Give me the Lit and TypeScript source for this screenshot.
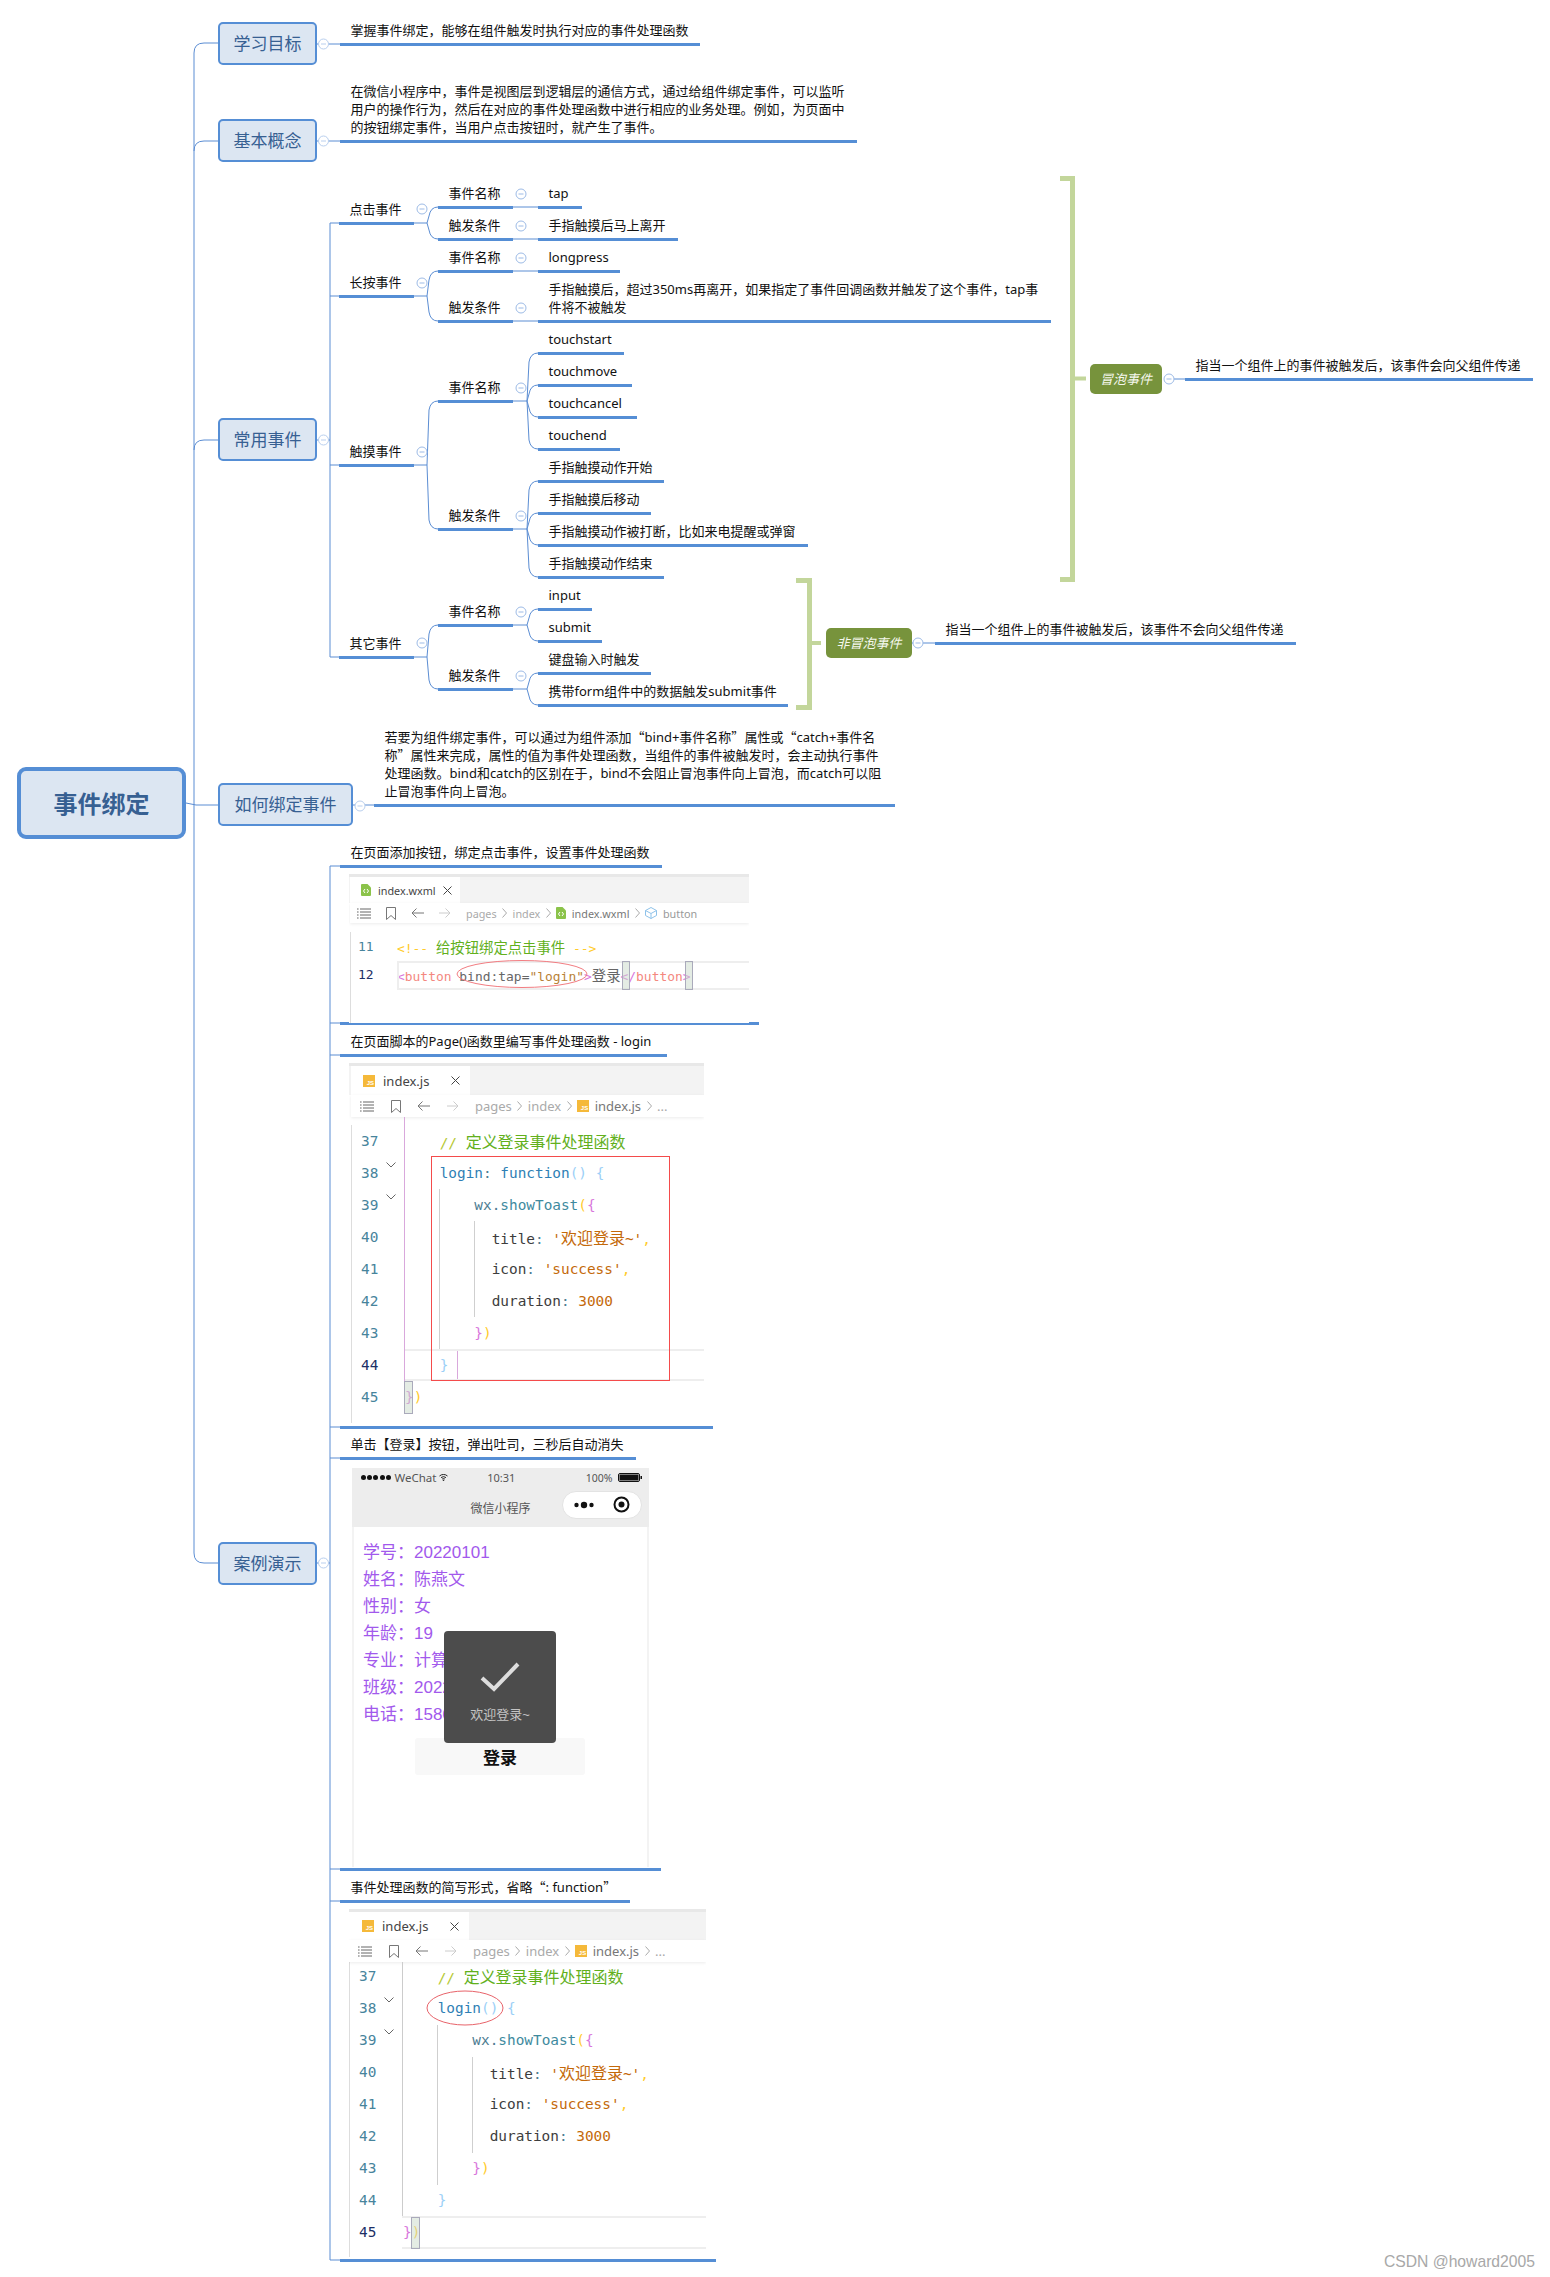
import { LitElement, html, css, svg } from "lit";
import { customElement } from "lit/decorators.js";

type Leaf = { x0: number; x1: number; y: number; lines?: string[] };

const L4 = 538;
const leaves: Leaf[] = [
  { x0: 340, x1: 700, y: 44, lines: ["掌握事件绑定，能够在组件触发时执行对应的事件处理函数"] },
  { x0: 340, x1: 857, y: 141, lines: ["在微信小程序中，事件是视图层到逻辑层的通信方式，通过给组件绑定事件，可以监听", "用户的操作行为，然后在对应的事件处理函数中进行相应的业务处理。例如，为页面中", "的按钮绑定事件，当用户点击按钮时，就产生了事件。"] },
  { x0: 339, x1: 414, y: 223, lines: ["点击事件"] },
  { x0: 339, x1: 414, y: 296, lines: ["长按事件"] },
  { x0: 339, x1: 414, y: 465, lines: ["触摸事件"] },
  { x0: 339, x1: 414, y: 657, lines: ["其它事件"] },
  { x0: 438, x1: 513, y: 207, lines: ["事件名称"] },
  { x0: 438, x1: 513, y: 239, lines: ["触发条件"] },
  { x0: 438, x1: 513, y: 271, lines: ["事件名称"] },
  { x0: 438, x1: 513, y: 321, lines: ["触发条件"] },
  { x0: 438, x1: 513, y: 401, lines: ["事件名称"] },
  { x0: 438, x1: 513, y: 529, lines: ["触发条件"] },
  { x0: 438, x1: 513, y: 625, lines: ["事件名称"] },
  { x0: 438, x1: 513, y: 689, lines: ["触发条件"] },
  { x0: L4, x1: 582, y: 207, lines: ["tap"] },
  { x0: L4, x1: 678, y: 239, lines: ["手指触摸后马上离开"] },
  { x0: L4, x1: 620, y: 271, lines: ["longpress"] },
  { x0: L4, x1: 1051, y: 321, lines: ["手指触摸后，超过350ms再离开，如果指定了事件回调函数并触发了这个事件，tap事", "件将不被触发"] },
  { x0: L4, x1: 624, y: 353, lines: ["touchstart"] },
  { x0: L4, x1: 632, y: 385, lines: ["touchmove"] },
  { x0: L4, x1: 637, y: 417, lines: ["touchcancel"] },
  { x0: L4, x1: 620, y: 449, lines: ["touchend"] },
  { x0: L4, x1: 664, y: 481, lines: ["手指触摸动作开始"] },
  { x0: L4, x1: 651, y: 513, lines: ["手指触摸后移动"] },
  { x0: L4, x1: 808, y: 545, lines: ["手指触摸动作被打断，比如来电提醒或弹窗"] },
  { x0: L4, x1: 664, y: 577, lines: ["手指触摸动作结束"] },
  { x0: L4, x1: 592, y: 609, lines: ["input"] },
  { x0: L4, x1: 602, y: 641, lines: ["submit"] },
  { x0: L4, x1: 651, y: 673, lines: ["键盘输入时触发"] },
  { x0: L4, x1: 788, y: 705, lines: ["携带form组件中的数据触发submit事件"] },
  { x0: 1185, x1: 1533, y: 379, lines: ["指当一个组件上的事件被触发后，该事件会向父组件传递"] },
  { x0: 935, x1: 1296, y: 643, lines: ["指当一个组件上的事件被触发后，该事件不会向父组件传递"] },
  { x0: 374, x1: 895, y: 805, lines: ["若要为组件绑定事件，可以通过为组件添加“bind+事件名称”属性或“catch+事件名", "称”属性来完成，属性的值为事件处理函数，当组件的事件被触发时，会主动执行事件", "处理函数。bind和catch的区别在于，bind不会阻止冒泡事件向上冒泡，而catch可以阻", "止冒泡事件向上冒泡。"] },
  { x0: 340, x1: 662, y: 866, lines: ["在页面添加按钮，绑定点击事件，设置事件处理函数"] },
  { x0: 340, x1: 759, y: 1023 },
  { x0: 340, x1: 667, y: 1055, lines: ["在页面脚本的Page()函数里编写事件处理函数 - login"] },
  { x0: 340, x1: 713, y: 1427 },
  { x0: 340, x1: 636, y: 1458, lines: ["单击【登录】按钮，弹出吐司，三秒后自动消失"] },
  { x0: 340, x1: 661, y: 1869 },
  { x0: 340, x1: 630, y: 1901, lines: ["事件处理函数的简写形式，省略“: function”"] },
  { x0: 340, x1: 716, y: 2260 },
];

const topics = [
  { x: 218, y: 22, w: 99, h: 43, t: "学习目标" },
  { x: 218, y: 119, w: 99, h: 43, t: "基本概念" },
  { x: 218, y: 418, w: 99, h: 43, t: "常用事件" },
  { x: 218, y: 783, w: 135, h: 43, t: "如何绑定事件" },
  { x: 218, y: 1542, w: 99, h: 43, t: "案例演示" },
];

const softDots = [[323.5, 44], [323.5, 141], [323.5, 440], [360, 806], [323.5, 1563]];
const dots = [
  [422, 209], [422, 283], [422, 452], [422, 643],
  [521, 194], [521, 226], [521, 258], [521, 308], [521, 388], [521, 516], [521, 612], [521, 676],
  [1169, 379], [918, 643],
];

const bend = (x: number, y0: number, tx: number, y1: number) => {
  const s = y1 > y0 ? 1 : -1;
  return `M${x} ${y0} L${x + 2} ${y1 - s * 9} Q${x + 3.5} ${y1} ${tx} ${y1}`;
};
const forks: [number, number, number, number[]][] = [
  [414, 223, 427, [207, 239]],
  [414, 296, 427, [271, 321]],
  [414, 465, 427, [401, 529]],
  [414, 657, 427, [625, 689]],
  [513, 401, 527, [353, 385, 417, 449]],
  [513, 529, 527, [481, 513, 545, 577]],
  [513, 625, 527, [609, 641]],
  [513, 689, 527, [673, 705]],
];

const connectors = () => {
  const d: string[] = [
    "M219 43 H204 Q194 43 194 53 V1553 Q194 1563 204 1563 H218",
    "M194 151 Q194 141 204 141 H218",
    "M194 450 Q194 440 204 440 H218",
    "M186 803 L196 805 H218",
    "M317 44 H340", "M317 141 H340", "M317 440 H330", "M353 805 H374", "M317 1563 H330",
    "M339 223 H330 V657 H339", "M330 296 H339", "M330 465 H339",
    "M513 207 H538", "M513 239 H538", "M513 271 H538", "M513 321 H538",
    "M1165 379 H1185", "M912 643 H935",
    "M340 866 H330 V2260 H340", "M330 1023 H340", "M330 1055 H340", "M330 1427 H340",
    "M330 1458 H340", "M330 1869 H340", "M330 1901 H340",
  ];
  for (const [x0, y, fx, ys] of forks) {
    d.push(`M${x0} ${y} H${fx}`);
    for (const yy of ys) d.push(bend(fx, y, fx + 11, yy));
  }
  return d;
};

const s = (c: string, t: string) => html`<span class=${c}>${t}</span>`;
const quoted = (t: string) =>
  t.split(/([“”])/).map((p) => (p === "“" || p === "”" ? html`<span class="q">${p}</span>` : p));

const row39 = html`        ${s("tx", "wx.")}${s("fn2", "showToast")}${s("ye", "(")}${s("pk", "{")}`;
const row40 = html`          ${s("key", "title")}${s("tx", ":")} ${s("str", "'")}<span class="str cn">欢迎登录</span>${s("str", "~'")}${s("ye", ",")}`;
const row41 = html`          ${s("key", "icon")}${s("tx", ":")} ${s("str", "'success'")}${s("ye", ",")}`;
const row42 = html`          ${s("key", "duration")}${s("tx", ":")} ${s("str", "3000")}`;
const row43 = html`        ${s("pk", "}")}${s("ye", ")")}`;
const comment = html`    ${s("sl", "//")} <span class="cmt cn">定义登录事件处理函数</span>`;

type Row = { n: number; active?: boolean; chev?: boolean; code: unknown };
const pane2Rows: Row[] = [
  { n: 37, code: comment },
  { n: 38, chev: true, code: html`    ${s("fn", "login")}${s("tx", ":")} ${s("fn", "function")}${s("par", "()")} ${s("par", "{")}` },
  { n: 39, chev: true, code: row39 },
  { n: 40, code: row40 },
  { n: 41, code: row41 },
  { n: 42, code: row42 },
  { n: 43, code: row43 },
  { n: 44, active: true, code: html`    ${s("par", "}")}` },
  { n: 45, code: html`${s("pk", "}")}${s("ye", ")")}` },
];
const pane4Rows: Row[] = [
  { n: 37, code: comment },
  { n: 38, chev: true, code: html`    ${s("fn", "login")}${s("par", "()")} ${s("par", "{")}` },
  { n: 39, chev: true, code: row39 },
  { n: 40, code: row40 },
  { n: 41, code: row41 },
  { n: 42, code: row42 },
  { n: 43, code: row43 },
  { n: 44, code: html`    ${s("par", "}")}` },
  { n: 45, active: true, code: html`${s("pk", "}")}${s("ye", ")")}` },
];
const pane1Rows: Row[] = [
  { n: 11, code: html`${s("ye", "<!--")} <span class="cmt cn">给按钮绑定点击事件</span> ${s("ye", "-->")}` },
  {
    n: 12,
    active: true,
    code: html`${s("pk", "<")}${s("tag", "button")} ${s("gr", "bind:tap=")}${s("val", '"login"')}${s("pk", ">")}<span class="gr cn">登录</span>${s("pk", "</")}${s("tag", "button")}${s("pk", ">")}`,
  },
];

const listIcon = svg`<svg class="ic" width="14" height="11" viewBox="0 0 14 11"><path d="M0 1h1.6M0 4h1.6M0 7h1.6M0 10h1.6M3 1h11M3 4h11M3 7h11M3 10h11" stroke="#666" fill="none"/></svg>`;
const markIcon = svg`<svg class="ic" width="10" height="13" viewBox="0 0 10 13"><path d="M.5.5h9v12L5 8.5.5 12.500z" stroke="#777" fill="none"/></svg>`;
const backIcon = svg`<svg class="ic" width="13" height="10" viewBox="0 0 13 10"><path d="M13 5H1M5.500.5 1 5l4.500 4.500" stroke="#777" fill="none"/></svg>`;
const fwdIcon = svg`<svg class="ic" width="12" height="10" viewBox="0 0 12 10"><path d="M0 5h11M6.500.5 11 5l-4.500 4.500" stroke="#ccc" fill="none"/></svg>`;
const sep = svg`<svg class="ic" width="5" height="10" viewBox="0 0 5 10"><path d="M.5.5 4.500 5 .5 9.500" stroke="#aaa" fill="none"/></svg>`;
const closeIcon = svg`<svg class="ic" width="9" height="9" viewBox="0 0 9 9"><path d="M.5.5l8 8M8.500.5l-8 8" stroke="#444" fill="none"/></svg>`;
const chevron = svg`<svg class="chev" width="10" height="6" viewBox="0 0 10 6"><path d="M.5.5 5 5 9.500.5" stroke="#666" fill="none"/></svg>`;
const wxmlIcon = svg`<svg class="ic" width="10" height="12" viewBox="0 0 10 12"><path d="M1 0h5.500L10 3.500V11a1 1 0 0 1-1 1H1a1 1 0 0 1-1-1V1a1 1 0 0 1 1-1z" fill="#8bc34a"/><path d="M4 5 2.500 7 4 9M6 5l1.500 2L6 9" stroke="#fff" fill="none"/></svg>`;
const cubeIcon = svg`<svg class="ic" width="12" height="12" viewBox="0 0 12 12"><path d="M6 .5 11.500 3.500V8.500L6 11.500.5 8.500V3.500zM.5 3.500 6 6.500l5.500-3M6 6.500v5" stroke="#8ec2ea" fill="none"/></svg>`;
const jsIcon = html`<span class="js">JS</span>`;

const wifi = svg`<svg class="ic" width="9" height="7" viewBox="0 0 9 7"><path d="M.5 2a6 6 0 0 1 8 0M2 3.600a4 4 0 0 1 5 0M3.200 5a2 2 0 0 1 2.600 0" stroke="#222" fill="none"/><circle cx="4.500" cy="6.200" r=".8" fill="#222"/></svg>`;
const battery = svg`<svg class="ic" width="24" height="9" viewBox="0 0 24 9"><rect x=".5" y=".5" width="21" height="8" rx="1.500" fill="none" stroke="#111"/><rect x="1.500" y="1.500" width="19" height="6" rx=".5" fill="#111"/><rect x="22.500" y="3" width="1.500" height="3" fill="#111"/></svg>`;

@customElement("app-root")
export class AppRoot extends LitElement {
  static styles = css`
    :host { display: block; width: 1550px; height: 2277px; background: #fff; }
    .stage { position: relative; width: 1550px; height: 2277px; overflow: hidden; font-family: "Noto Sans", "Noto Sans CJK SC", sans-serif; color: #111; }
    .layer { position: absolute; left: 0; top: 0; pointer-events: none; }
    .over { z-index: 5; }
    .leaf { position: absolute; box-sizing: border-box; padding: 0 0 3.500px 10.500px; border-bottom: 3px solid #558ed5; font-size: 13px; line-height: 18px; white-space: nowrap; }
    .leaf div { height: 18px; }
    .q { font-family: "Noto Sans CJK SC", sans-serif; }
    .topic { position: absolute; box-sizing: border-box; display: flex; align-items: center; justify-content: center; padding-bottom: 2px; background: #dce6f2; border: 2px solid #558ed5; border-radius: 5px; color: #376092; font-size: 17px; }
    .root { left: 17px; top: 767px; width: 169px; height: 72px; border-width: 4px; border-radius: 9px; font-size: 24px; font-weight: 700; }
    .pill { position: absolute; display: flex; align-items: center; justify-content: center; box-sizing: border-box; padding-bottom: 1px; background: #77933c; color: #f4f7ec; border-radius: 5px; font-size: 13px; font-style: italic; height: 30px; }
    .pill.a { left: 1090px; top: 364px; width: 72px; }
    .pill.b { left: 826px; top: 628px; width: 86px; }

    .pane { position: absolute; box-sizing: border-box; background: #fff; overflow: hidden; }
    .strip { height: 3px; background: #e8e8e8; }
    .tabbar { height: var(--tab); background: #f3f3f3; display: flex; padding-left: var(--inset); }
    .tab { width: var(--tabw); box-sizing: border-box; padding: 0 10px 0 var(--tabpad); background: #fff; display: flex; align-items: center; gap: var(--icgap); font-size: var(--fs); color: #444; }
    .tab svg { margin-left: auto; }
    .tab .ic { flex: none; }
    .crumbs { height: var(--cr); margin-left: var(--inset); padding-left: var(--crpad); display: flex; align-items: center; gap: 5.500px; font-size: var(--fs); color: #aaa; background: #fff; box-shadow: 0 1px 3px rgba(0, 0, 0, .08); position: relative; z-index: 1; }
    .crumbs .ic { flex: none; }
    .crumbs .lg { margin-right: var(--big); display: flex; }
    .crumbs .file { color: #777; }
    .crumbs .file2 { color: #999; }
    .body { margin-left: var(--inset); margin-top: var(--top); border-left: 1px solid #ddd; height: 100%; font-family: "DejaVu Sans Mono", "Noto Sans CJK SC", monospace; font-size: var(--code); }
    .row { display: flex; align-items: center; height: var(--rowh); white-space: pre; }
    .num { width: var(--gut); box-sizing: border-box; padding-left: var(--numpad); flex: none; display: flex; align-items: center; color: #47849c; position: relative; }
    .num.on { color: #1c2f66; }
    .chev { position: absolute; right: var(--chevr); top: -3px; }
    .js { display: inline-block; flex: none; width: 12px; height: 12px; background: #f5b93a; color: #fff; font: 700 6px/7px "Liberation Sans", sans-serif; text-align: right; padding-top: 5px; box-sizing: border-box; padding-right: 1px; }
    .cn { font-family: "Noto Sans CJK SC", sans-serif; font-size: 1.11em; }
    .cmt { color: #62b01c; }
    .sl { color: #b5c832; }
    .fn { color: #2f7fb5; }
    .fn2 { color: #3e8a9e; }
    .par { color: #9cd0f7; }
    .tx { color: #4e7d92; }
    .key { color: #3d3d3d; }
    .str { color: #c4690a; }
    .ye { color: #ffcb2b; }
    .pk { color: #d978dc; }
    .tag { color: #f4887f; }
    .gr { color: #666; }
    .val { color: #b98237; }

    .phone { position: absolute; left: 352px; top: 1468px; width: 297px; height: 399px; box-sizing: border-box; border: solid #f3f3f3; border-width: 0 2px; background: #fff; font-family: "Liberation Sans", "Noto Sans CJK SC", sans-serif; }
    .head { background: #ededed; height: 59px; margin: 0 -2px; color: #555; }
    .status { height: 19px; display: grid; grid-template-columns: 1fr auto 1fr; align-items: center; padding: 0 7.500px 0 9px; font-size: 11px; font-family: "Noto Sans", sans-serif; }
    .carrier { display: flex; align-items: center; gap: 1.200px; }
    .pip { width: 5px; height: 5px; border-radius: 50%; background: #111; }
    .carrier span { margin: 0 1px 0 2.500px; font-size: 11.500px; }
    .right { display: flex; align-items: center; justify-content: flex-end; gap: 5px; font-size: 10.500px; }
    .nav { height: 40px; display: grid; grid-template-columns: 1fr auto 1fr; align-items: center; padding: 0 7px; font-size: 12px; font-family: "Noto Sans CJK SC", sans-serif; }
    .capsule { justify-self: end; width: 80px; height: 28px; box-sizing: border-box; margin-top: -5px; border: 1px solid #e3e3e3; border-radius: 14px; background: #fff; display: flex; align-items: center; justify-content: space-between; padding: 0 11px; }
    .info { padding: 11.500px 0 0 9px; font-size: 17px; line-height: 27px; color: #a259ec; }
    .btn { width: 170px; height: 37px; margin: 10px 0 0 61px; display: flex; align-items: center; justify-content: center; background: #f8f8f8; border-radius: 3px; color: #111; font-weight: 700; font-size: 17px; }
    .toast { position: absolute; left: 90px; top: 163px; width: 112px; height: 112px; background: #4c4c4c; border-radius: 4px; display: flex; flex-direction: column; align-items: center; color: #c4c4c4; font-size: 13px; }
    .toast svg { margin-top: 30px; }
    .toast div { margin-top: 11px; }
    .mark { position: absolute; right: 15px; bottom: 6px; font: 15.700px/18px "Liberation Sans", sans-serif; color: #a8a8a8; }
  `;

  private pane(o: { left: number; top: number; w: number; h: number; small?: boolean; inset: number; tab: number; tabw: number; tabpad: number; crpad: number; gut: number; numpad: number; bodyTop: number; rowh: number; chevr?: number; rows: Row[]; crumbs: unknown; tabBody: unknown }) {
    const vars = `left:${o.left}px;top:${o.top}px;width:${o.w}px;height:${o.h}px;--tab:${o.tab}px;--inset:${o.inset}px;--tabw:${o.tabw}px;--tabpad:${o.tabpad}px;--crpad:${o.crpad}px;--gut:${o.gut - o.inset - 1}px;--numpad:${o.numpad - o.inset - 1}px;--top:${o.bodyTop}px;--rowh:${o.rowh}px;--chevr:${o.chevr ?? 9}px;` +
      (o.small
        ? "--cr:20px;--fs:10.800px;--code:12.950px;--icgap:7px;--big:9.500px;"
        : "--cr:22px;--fs:13px;--code:14.400px;--icgap:8px;--big:11px;");
    return html`<div class="pane" style=${vars}>
      <div class="strip"></div>
      <div class="tabbar"><div class="tab">${o.tabBody}</div></div>
      <div class="crumbs">${o.crumbs}</div>
      <div class="body">
        ${o.rows.map(
          (r) => html`<div class="row"><div class="num ${r.active ? "on" : ""}">${r.n}${r.chev ? chevron : ""}</div><div>${r.code}</div></div>`
        )}
      </div>
    </div>`;
  }

  private jsCrumbs() {
    return html`<span class="lg">${listIcon}</span><span class="lg">${markIcon}</span><span class="lg">${backIcon}</span><span class="lg">${fwdIcon}</span>
      <span>pages</span>${sep}<span>index</span>${sep}${jsIcon}<span class="file">index.js</span>${sep}<span>...</span>`;
  }

  private overlay() {
    const guide = "#cfcfcf";
    const act = "#eeeeee";
    return svg`
      <g fill="none">
        <path d="M404.500 1117V1381M457.500 1350V1381" stroke="#d9a8dc"/>
        <path d="M439.500 1189V1349M474.500 1221V1317M437.500 2025V2185M472.500 2057V2153" stroke=${guide}/>
        <path d="M402.500 1962V2217" stroke="#ccc"/>
        <path d="M405 1350H704M405 1380H704M402 2217H706M402 2248H706" stroke=${act} stroke-width="2"/>
        <path d="M398 961.500V989M397 962H749M397 989H749" stroke=${act} stroke-width="2"/>
        <rect x="431.500" y="1156.500" width="238" height="224" stroke="#f44b4b"/>
        <ellipse cx="522" cy="974" rx="65" ry="13.500" stroke="#f27d82"/>
        <ellipse cx="465" cy="2008" rx="38" ry="17" stroke="#e8636a"/>
      </g>
      <g fill="#c9d9c9" fill-opacity=".5" stroke="#aab">
        <rect x="622.500" y="961.500" width="7" height="28"/>
        <rect x="685.500" y="961.500" width="7" height="28"/>
        <rect x="404.500" y="1381.500" width="8" height="32"/>
        <rect x="411.500" y="2217.500" width="8" height="31"/>
      </g>`;
  }

  render() {
    return html`<div class="stage">
      <svg class="layer" width="1550" height="2277" viewBox="0 0 1550 2277">
        <g fill="none" stroke="#5b8dd3">
          ${connectors().map((d) => svg`<path d=${d}/>`)}
        </g>
        <g fill="none" stroke="#c3d69b">
          <path d="M1060 178.500H1072.500V579.500H1060" stroke-width="5"/>
          <path d="M1075 378.500H1086" stroke-width="4"/>
          <path d="M796 580.500H809.500V707.500H796" stroke-width="5"/>
          <path d="M812 643H821" stroke-width="4"/>
        </g>
        ${softDots.map(([x, y]) => svg`<circle cx=${x} cy=${y} r="5" fill="#fff" stroke="#b9cfee"/><path d="M${x - 2.5} ${y}h5" stroke="#b9cfee"/>`)}
        ${dots.map(([x, y]) => svg`<circle cx=${x} cy=${y} r="5" fill="#fff" stroke="#9dbbe6"/><path d="M${x - 2.5} ${y}h5" stroke="#9dbbe6"/>`)}
      </svg>

      <div class="topic root">事件绑定</div>
      ${topics.map((t) => html`<div class="topic" style="left:${t.x}px;top:${t.y}px;width:${t.w}px;height:${t.h}px">${t.t}</div>`)}
      <div class="pill a">冒泡事件</div>
      <div class="pill b">非冒泡事件</div>
      ${leaves.map(
        (l) => html`<div class="leaf" style="left:${l.x0}px;width:${l.x1 - l.x0}px;bottom:${2277 - l.y - 1.5}px">${(l.lines ?? []).map((t) => html`<div>${quoted(t)}</div>`)}</div>`
      )}

      ${this.pane({
        left: 349, top: 874, w: 400, h: 149, small: true, inset: 1, tab: 26, tabw: 110, tabpad: 11, crpad: 7, gut: 48, numpad: 9, bodyTop: 9, rowh: 28, rows: pane1Rows,
        tabBody: html`${wxmlIcon}<span>index.wxml</span>${closeIcon}`,
        crumbs: html`<span class="lg">${listIcon}</span><span class="lg">${markIcon}</span><span class="lg">${backIcon}</span><span class="lg">${fwdIcon}</span>
          <span>pages</span>${sep}<span>index</span>${sep}${wxmlIcon}<span class="file">index.wxml</span>${sep}${cubeIcon}<span class="file2">button</span>`,
      })}
      ${this.pane({
        left: 349, top: 1063, w: 355, h: 360, inset: 2, tab: 29, tabw: 119, tabpad: 12, crpad: 9, gut: 56, numpad: 12, bodyTop: 7.5, rowh: 32, rows: pane2Rows,
        tabBody: html`${jsIcon}<span>index.js</span>${closeIcon}`,
        crumbs: this.jsCrumbs(),
      })}
      ${this.pane({
        left: 349, top: 1909, w: 357, h: 348, inset: 0, tab: 28, tabw: 120, tabpad: 13, crpad: 9, gut: 54, numpad: 10, bodyTop: -2, rowh: 32, rows: pane4Rows,
        tabBody: html`${jsIcon}<span>index.js</span>${closeIcon}`,
        crumbs: this.jsCrumbs(),
      })}

      <div class="phone">
        <div class="head">
          <div class="status">
            <div class="carrier"><i class="pip"></i><i class="pip"></i><i class="pip"></i><i class="pip"></i><i class="pip"></i><span>WeChat</span>${wifi}</div>
            <div>10:31</div>
            <div class="right">100%${battery}</div>
          </div>
          <div class="nav">
            <div></div>
            <div>微信小程序</div>
            <div class="capsule">
              <svg width="20" height="8" viewBox="0 0 20 8"><circle cx="2.500" cy="4" r="2.200" fill="#111"/><circle cx="10" cy="4" r="3.200" fill="#111"/><circle cx="17.500" cy="4" r="2.200" fill="#111"/></svg>
              <svg width="17" height="17" viewBox="0 0 17 17"><circle cx="8.500" cy="8.500" r="7" fill="none" stroke="#111" stroke-width="2"/><circle cx="8.500" cy="8.500" r="3" fill="#111"/></svg>
            </div>
          </div>
        </div>
        <div class="info">
          <div>学号：20220101</div>
          <div>姓名：陈燕文</div>
          <div>性别：女</div>
          <div>年龄：19</div>
          <div>专业：计算</div>
          <div>班级：2022</div>
          <div>电话：1586</div>
        </div>
        <div class="btn">登录</div>
        <div class="toast">
          <svg width="42" height="32" viewBox="0 0 42 32"><path d="M3 17 15 28 39 3" fill="none" stroke="#ddd" stroke-width="4"/></svg>
          <div>欢迎登录~</div>
        </div>
      </div>

      <svg class="layer over" width="1550" height="2277" viewBox="0 0 1550 2277">${this.overlay()}</svg>
      <div class="mark">CSDN @howard2005</div>
    </div>`;
  }
}
